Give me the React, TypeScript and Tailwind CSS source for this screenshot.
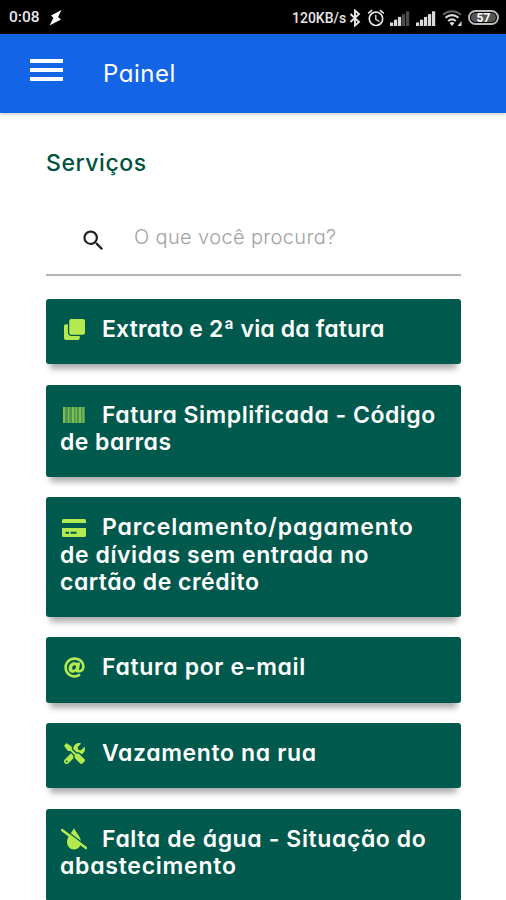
import type { ReactNode } from "react";
import { FaAt, FaClone, FaTools } from "react-icons/fa";
import { MdAlarm, MdSearch } from "react-icons/md";

type Line = { text: string; tracking: string };
type Service = { icon: ReactNode; lines: Line[] };

function Barcode() {
  return (
    <svg width="22" height="16" viewBox="0 0 22 16" fill="#b2ea50">
      <rect width="22" height="16" opacity="0.42" />
      {[0, 5, 9, 12.5, 16, 19.5].map((x, i) => (
        <rect key={x} x={x} width={i % 2 ? 1.3 : 2} height="16" opacity="0.5" />
      ))}
    </svg>
  );
}

function Card() {
  return (
    <svg width="24" height="18" viewBox="0 0 24 18" fill="#b2ea50">
      <path d="M1.5 0h21Q24 0 24 1.5V4H0V1.5Q0 0 1.5 0z" />
      <path
        fillRule="evenodd"
        d="M0 9h24v7.5q0 1.5-1.5 1.5h-21Q0 18 0 16.5zM3.5 12.7v2h3.5v-2zM8.5 12.7v2h6v-2z"
      />
    </svg>
  );
}

function NoWater() {
  return (
    <svg width="26" height="22" viewBox="0 0 26 22" fill="#b2ea50">
      <path d="M13 0c1 3.5 7 8 7 14.5a7 7 0 0 1-14 0C6 8 12 3.5 13 0z" />
      <path d="M2 .3 26 18.5" stroke="#00594d" strokeWidth="1.4" />
      <path d="M1 2 25 20" stroke="#b2ea50" strokeWidth="2.6" strokeLinecap="round" />
    </svg>
  );
}

const services: Service[] = [
  {
    icon: <FaClone size={21} />,
    lines: [{ text: "Extrato e 2ª via da fatura", tracking: "tracking-[0.15px]" }],
  },
  {
    icon: <Barcode />,
    lines: [
      { text: "Fatura Simplificada - Código", tracking: "tracking-[0.5px]" },
      { text: "de barras", tracking: "tracking-[0.45px]" },
    ],
  },
  {
    icon: <Card />,
    lines: [
      { text: "Parcelamento/pagamento", tracking: "tracking-[0.9px]" },
      { text: "de dívidas sem entrada no", tracking: "tracking-[0.57px]" },
      { text: "cartão de crédito", tracking: "tracking-[0.5px]" },
    ],
  },
  {
    icon: <FaAt size={21} />,
    lines: [{ text: "Fatura por e-mail", tracking: "tracking-[0.65px]" }],
  },
  {
    icon: <FaTools size={21} />,
    lines: [{ text: "Vazamento na rua", tracking: "tracking-[0.63px]" }],
  },
  {
    icon: <NoWater />,
    lines: [
      { text: "Falta de água - Situação do", tracking: "tracking-[0.6px]" },
      { text: "abastecimento", tracking: "tracking-[0.75px]" },
    ],
  },
];

function Signal({ lit }: { lit: number }) {
  return (
    <svg width="20" height="15" viewBox="0 0 20 15">
      {[0, 1, 2, 3, 4].map((i) => (
        <rect key={i} x={i * 4} y={11.5 - i * 2.8} width="3.2" height={3.5 + i * 2.8} fill={i < lit ? "#dcdcdc" : "#4a4a4a"} />
      ))}
    </svg>
  );
}

function StatusBar() {
  return (
    <div className="flex h-[34px] items-center bg-black pl-[9px] pt-[2px] text-[#e6e6e6]">
      <span className="w-[40px] font-[Roboto] text-[15.5px] font-medium">0:08</span>
      <svg className="mb-px" width="14" height="16" viewBox="0 0 14 16" fill="#fff">
        <path d="M12.5 0 2 5.5 4.5 8 .5 15.5 12 9.5 9 7z" />
      </svg>
      <span className="ml-[229px] w-[54px] whitespace-nowrap font-[Roboto] text-[14px] font-medium">120KB/s</span>
      <svg className="mb-px" width="18" height="18" viewBox="0 0 18 18" fill="none" stroke="currentColor" strokeWidth="1.9">
        <path d="m4.500 5 8.500 8-4 3.500v-15l4 3.500-8.500 8" />
      </svg>
      <MdAlarm size={20} className="mb-px ml-[2px]" />
      <div className="ml-[4px] flex gap-[6px]">
        <Signal lit={3} />
        <Signal lit={5} />
      </div>
      <svg className="ml-[6px]" width="21" height="17" viewBox="0 0 21 17" fill="none" stroke="#dcdcdc" strokeWidth="2">
        <path d="M1 4.5Q10 -2 19 4.5" stroke="#666" />
        <path d="M3.5 7.8Q10 2.5 16.5 7.8M6.2 11Q10 7.8 13.8 11" />
        <path d="m7.5 13 2.5 3 2.5-3q-2.5-2-5 0M19.5 11v5h-4z" fill="#dcdcdc" stroke="none" />
      </svg>
      <span className="mb-px ml-[5px] flex h-[15px] w-[31px] items-center justify-center rounded-full border-2 border-[#bdbdbd] p-px">
        <span className="flex h-full w-full items-center justify-center rounded-full bg-[#555] font-[Roboto] text-[12px] font-bold leading-none text-white">57</span>
      </span>
    </div>
  );
}

export default function App() {
  return (
    <div className="h-[900px] w-[506px] overflow-hidden bg-white font-[Inter,sans-serif] [font-feature-settings:'cv11']">
      <StatusBar />
      <header className="flex h-[79px] items-center bg-[#1464e6] pl-[30px] text-white shadow-[0_1px_4px_rgba(0,0,0,0.25)]">
        <div className="flex w-[73px] flex-col gap-[5px] pb-[7px]">
          <span className="h-[4px] w-[33px] bg-white" />
          <span className="h-[4px] w-[33px] bg-white" />
          <span className="h-[4px] w-[33px] bg-white" />
        </div>
        <h1 className="text-[24px] leading-none tracking-[0.5px]">Painel</h1>
      </header>
      <main className="pl-[46px] pr-[45px]">
        <h2 className="pt-[36px] text-[23px] font-medium leading-[28px] tracking-[0.55px] text-[#00523f]">Serviços</h2>
        <div className="flex h-[99px] items-center border-b-2 border-[#b4b4b4] pl-[34px] pt-[29px]">
          <MdSearch size={27} className="text-[#222]" />
          <span className="ml-[27px] pb-[6px] text-[20px] font-light tracking-[0.37px] text-[#a2a2a2]">O que você procura?</span>
        </div>
        <div className="mt-[23px] flex flex-col gap-[20.4px]">
          {services.map((service) => (
            <div
              key={service.lines[0].text}
              className="rounded-[3px] bg-[#00594d] pb-[21px] pl-[14px] pt-[17px] text-[23px] font-semibold leading-[27.2px] text-white shadow-[0_9px_6px_-4px_rgba(0,0,0,0.32)]"
            >
              {service.lines.map((line, i) => (
                <div key={line.text} className="flex items-center whitespace-nowrap">
                  {i === 0 && (
                    <span className="flex h-[27px] w-[28px] shrink-0 items-center justify-center text-[#b2ea50]">{service.icon}</span>
                  )}
                  <span className={i === 0 ? `ml-[14px] ${line.tracking}` : line.tracking}>{line.text}</span>
                </div>
              ))}
            </div>
          ))}
        </div>
      </main>
    </div>
  );
}
